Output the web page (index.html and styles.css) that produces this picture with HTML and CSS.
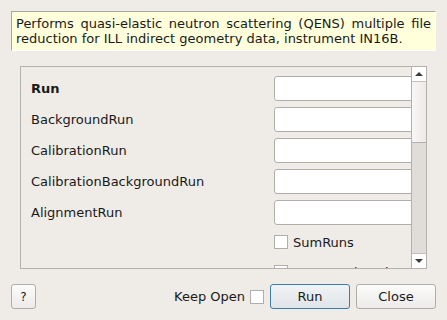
FILE: index.html
```html
<!DOCTYPE html>
<html lang="en">
  <head>
    <meta charset="UTF-8" />
    <title>IndirectILLReductionQENS</title>
    <link rel="stylesheet" href="styles.css">
  </head>
  <body>
    <div class="desc">
      <p>Performs quasi-elastic neutron scattering (QENS) multiple file reduction for ILL indirect geometry data, instrument IN16B.</p>
    </div>

    <div class="frame">
      <div class="props">
        <div class="row">
          <label class="name bold">Run</label>
          <input type="text" class="field" />
        </div>
        <div class="row">
          <label class="name">BackgroundRun</label>
          <input type="text" class="field" />
        </div>
        <div class="row">
          <label class="name">CalibrationRun</label>
          <input type="text" class="field" />
        </div>
        <div class="row">
          <label class="name">CalibrationBackgroundRun</label>
          <input type="text" class="field" />
        </div>
        <div class="row">
          <label class="name">AlignmentRun</label>
          <input type="text" class="field" />
        </div>
        <div class="row check">
          <span class="name"></span>
          <span class="box"></span>
          <span class="boxlabel">SumRuns</span>
        </div>
        <div class="row check">
          <span class="name"></span>
          <span class="box"></span>
          <span class="boxlabel">CropDeadMonitorChannels</span>
        </div>
      </div>
      <div class="scrollbar">
        <div class="sb-btn"><span class="arrow up"></span></div>
        <div class="sb-thumb"></div>
        <div class="sb-track"></div>
        <div class="sb-btn"><span class="arrow down"></span></div>
      </div>
    </div>

    <div class="buttons">
      <button class="btn help">?</button>
      <span class="spacer"></span>
      <span class="keep">Keep Open</span>
      <span class="box"></span>
      <button class="btn wide default">Run</button>
      <button class="btn wide">Close</button>
    </div>
  </body>
</html>
```

FILE: styles.css
```css
body {
  margin: 0;
  padding: 11px 11px 0 11px;
  background: #efebe7;
  font-family: "DejaVu Sans", sans-serif;
  font-size: 13px;
  color: #1a1a1a;
  width: 425px;
  height: 309px;
  overflow: hidden;
}
.desc {
  background: #ffffdc;
  border-top: 1px solid #a8a6a3;
  border-left: 1px solid #a8a6a3;
  border-bottom: 1px solid #ffffff;
  border-right: 1px solid #ffffff;
  height: 38px;
  padding: 0 4px 0 4px;
}
.desc p {
  margin: 4px 0 0 0;
  line-height: 15px;
  text-align: justify;
}
.frame {
  display: flex;
  margin: 15px 9px 0 9px;
  height: 201px;
  border: 1px solid #b4b1ad;
  overflow: hidden;
}
.props {
  flex: 1;
  overflow: hidden;
  padding: 9px 0 0 10px;
}
.row {
  display: flex;
  align-items: center;
  height: 25px;
  margin-bottom: 6px;
  white-space: nowrap;
}
.name {
  flex: none;
  width: 243px;
}
.bold {
  font-weight: bold;
}
.field {
  flex: none;
  width: 160px;
  height: 25px;
  box-sizing: border-box;
  margin: 0;
  border: 1px solid #b0aeab;
  border-radius: 3px;
  background: #ffffff;
  font: inherit;
}
.check {
  height: 14px;
  margin: 10px 0 16px 0;
}
.box {
  flex: none;
  display: inline-block;
  width: 14px;
  height: 14px;
  box-sizing: border-box;
  border: 1px solid #b0aeab;
  background: #ffffff;
}
.boxlabel {
  margin-left: 5px;
}
.scrollbar {
  flex: none;
  display: flex;
  flex-direction: column;
  width: 14px;
  border-left: 1px solid #b4b1ad;
}
.sb-btn {
  height: 14px;
  background: #ffffff;
  display: flex;
  align-items: center;
  justify-content: center;
}
.sb-btn:first-child {
  border-bottom: 1px solid #c4c1bd;
}
.sb-btn:last-child {
  border-top: 1px solid #c4c1bd;
}
.arrow {
  width: 0;
  height: 0;
  border-left: 4px solid transparent;
  border-right: 4px solid transparent;
}
.arrow.up {
  border-bottom: 4px solid #3c3c3c;
}
.arrow.down {
  border-top: 4px solid #3c3c3c;
}
.sb-thumb {
  height: 60px;
  background: linear-gradient(to right, #f8f7f6, #eceae7);
  border-bottom: 1px solid #b4b1ad;
}
.sb-track {
  flex: 1;
  background: #dfdcd9;
}
.buttons {
  display: flex;
  align-items: center;
  margin-top: 15px;
  height: 25px;
}
.spacer {
  flex: 1;
}
.btn {
  height: 25px;
  box-sizing: border-box;
  border: 1px solid #b0aeab;
  border-radius: 3px;
  background: linear-gradient(#fbfbfa, #edebe9);
  font: inherit;
  color: #1a1a1a;
  padding: 0;
}
.help {
  width: 25px;
  font-size: 12px;
}
.wide {
  width: 80px;
  margin-left: 6px;
}
.default {
  border-color: #3a7cab;
  background: linear-gradient(#f1f3f5, #dfe4e8);
}
.keep {
  margin-right: 5px;
}
```
